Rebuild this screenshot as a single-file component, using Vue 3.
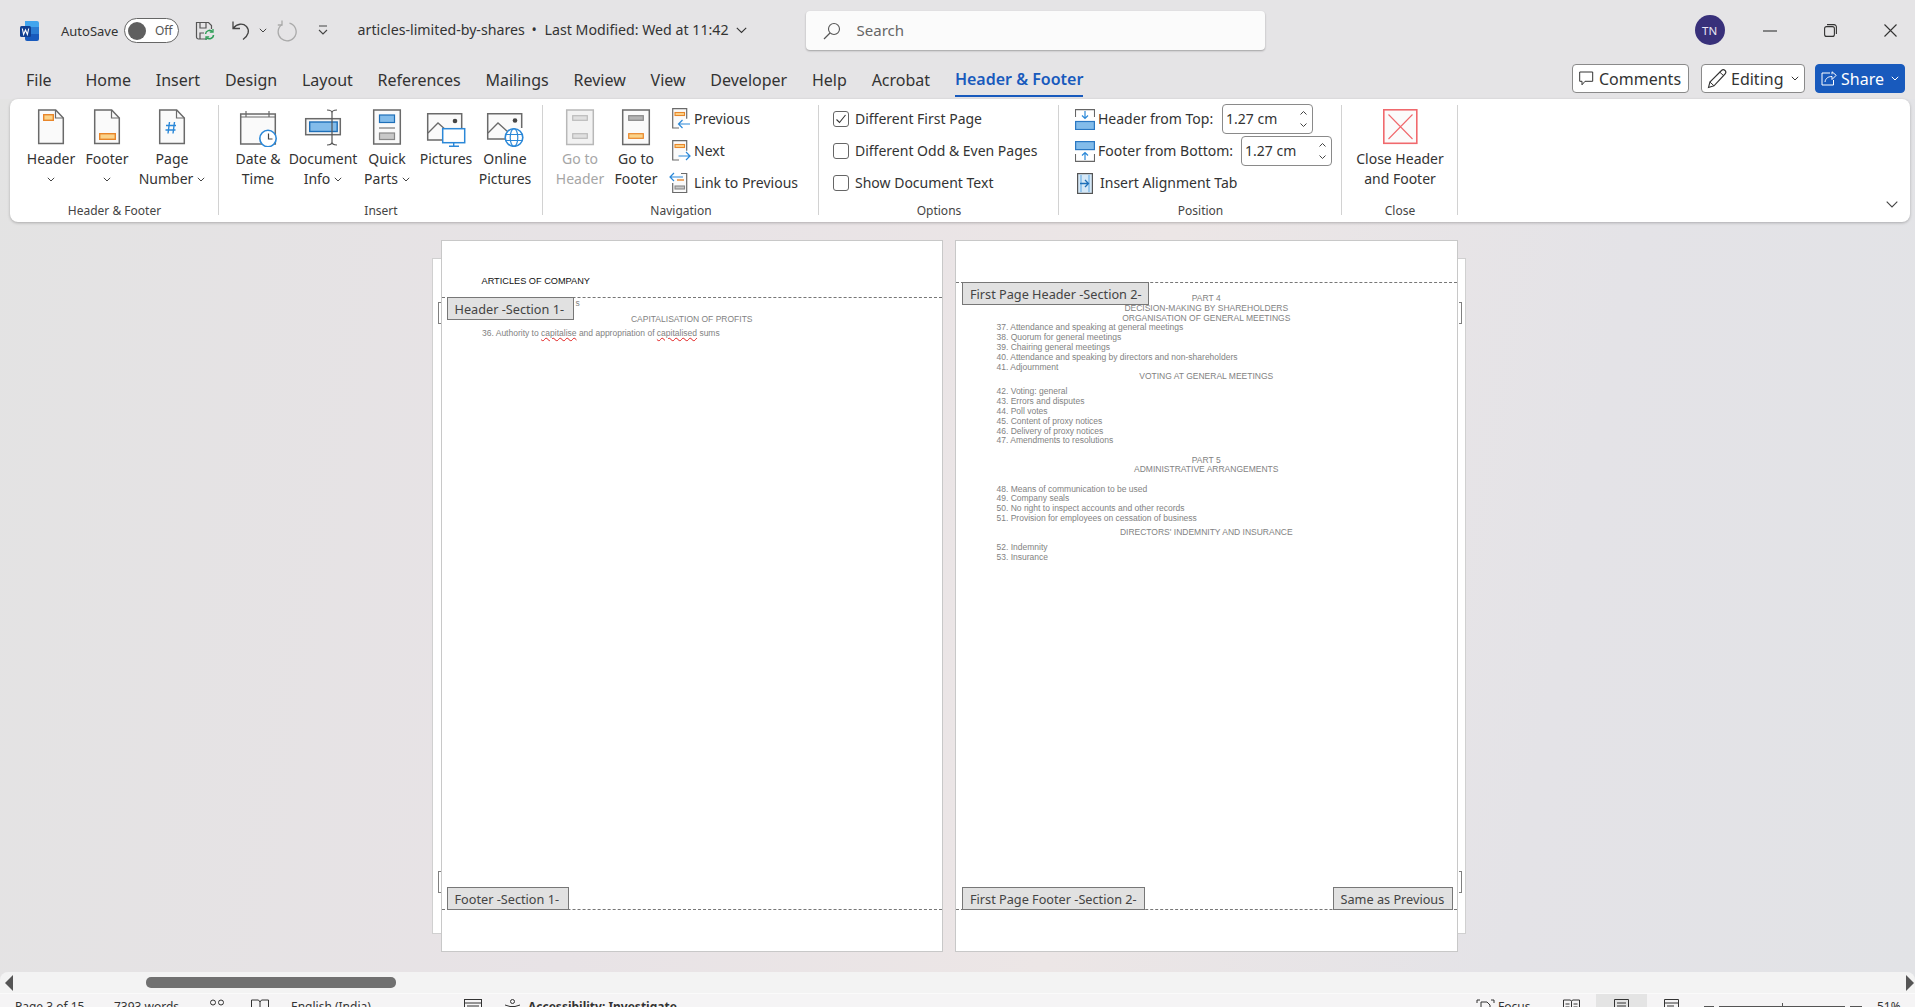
<template>
  <div class="word">
    <!-- title bar -->
    <header class="titlebar">
      <svg class="logo" width="20" height="20" viewBox="0 0 20 20">
        <path d="M5 0h12a2 2 0 0 1 2 2v4H5z" fill="#41a5ee" />
        <rect x="5" y="6" width="14" height="7" fill="#2b7cd3" />
        <path d="M5 13h14v5a2 2 0 0 1-2 2H7a2 2 0 0 1-2-2z" fill="#185abd" />
        <rect x="0" y="5" width="11" height="11" rx="1.5" fill="#103f91" />
        <path d="M2.3 7.5l1.3 6 1.9-4.5 1.9 4.5 1.3-6" fill="none" stroke="#fff" stroke-width="1.1" />
      </svg>
      <span class="autosave">AutoSave</span>
      <div class="toggle"><i class="knob"></i><span>Off</span></div>
      <svg class="save" width="20" height="21" viewBox="0 0 20 21">
        <path d="M12 19H3.5a2 2 0 0 1-2-2V2.5h12l3 3V9" fill="none" stroke="#555" stroke-width="1.2" />
        <path d="M5 3v5h6V3M5 19v-6h4" fill="none" stroke="#555" stroke-width="1.2" />
        <path d="M10.5 14a4 4 0 0 1 7-2.2M18.5 15a4 4 0 0 1-7 2.4" fill="none" stroke="#2f9e58" stroke-width="1.5" />
        <path d="M18 9v3.2h-3.2M11 20v-3.2h3.2" fill="none" stroke="#2f9e58" stroke-width="1.3" />
      </svg>
      <svg class="undo" width="20" height="21" viewBox="0 0 20 21">
        <path d="M2 1.500v7h7M2.500 8C6 3.500 12 3 15.500 6.500c3.500 4 2 9-3.500 13" fill="none" stroke="#444" stroke-width="1.300" />
      </svg>
      <svg class="qat-chev" width="8" height="5" viewBox="0 0 8 5"><path d="M.8.8L4 4l3.2-3.2" fill="none" stroke="#444" /></svg>
      <svg class="redo" width="20" height="22" viewBox="0 0 20 22">
        <path d="M12.500 3.200a9 9 0 1 1-7.500 1.300" fill="none" stroke="#aaa" stroke-width="1.300" />
        <path d="M5 .5v4.500H.8" fill="none" stroke="#aaa" stroke-width="1.300" />
      </svg>
      <svg class="qat-more" width="10" height="11" viewBox="0 0 10 11">
        <path d="M1 1h8M1 5l4 4 4-4" fill="none" stroke="#444" stroke-width="1.1" />
      </svg>
      <span class="doc-title">articles-limited-by-shares</span>
      <span class="doc-dot">•</span>
      <span class="doc-mod">Last Modified: Wed at 11:42</span>
      <svg class="doc-chev" width="11" height="7" viewBox="0 0 11 7"><path d="M.8.8l4.700 4.700L10.200.8" fill="none" stroke="#333" stroke-width="1.1" /></svg>

      <div class="search">
        <svg width="18" height="18" viewBox="0 0 18 18">
          <circle cx="11" cy="7" r="5.500" fill="none" stroke="#555" stroke-width="1.1" />
          <path d="M7 11l-6 6" stroke="#555" stroke-width="1.3" />
        </svg>
        <span class="search-text">Search</span>
      </div>

      <div class="avatar">TN</div>
      <svg class="win-min" width="14" height="2" viewBox="0 0 14 2"><path d="M0 1h14" stroke="#333" stroke-width="1.100" /></svg>
      <svg class="win-max" width="13" height="13" viewBox="0 0 13 13">
        <rect x=".6" y="2.600" width="9.800" height="9.800" rx="2" fill="none" stroke="#333" stroke-width="1.100" />
        <path d="M3 .6h7a2.400 2.400 0 0 1 2.400 2.400v7" fill="none" stroke="#333" stroke-width="1.100" />
      </svg>
      <svg class="win-close" width="13" height="13" viewBox="0 0 13 13"><path d="M.5.5l12 12M12.500.5l-12 12" stroke="#333" stroke-width="1.100" /></svg>
    </header>

    <!-- tabs row -->
    <nav class="tabs">
      <span v-for="t in tabs" :key="t" class="tab" :class="{ first: t === 'File' }">{{ t }}</span>
      <span class="tab active">Header &amp; Footer</span>
      <div class="tab-actions">
        <button class="act comments">
          <svg width="15" height="15" viewBox="0 0 15 15"><path d="M.7 1h13v9.300H6L3 13.800v-3.500H.7z" fill="none" stroke="#333" stroke-width="1" /></svg>
          Comments
        </button>
        <button class="act editing">
          <svg width="20" height="20" viewBox="0 0 20 20">
            <path d="M1.500 18.500l1.400-5.500L14.500 1.500a2 2 0 0 1 3.500 3.500L7 16.800z" fill="none" stroke="#333" stroke-width="1.100" />
            <path d="M2.900 13l4.100 3.800M12.800 3.200l4.200 3.800" stroke="#333" stroke-width="1" />
          </svg>
          Editing
          <svg class="chev" width="8" height="5" viewBox="0 0 8 5"><path d="M.8.8L4 4l3.200-3.200" fill="none" stroke="#333" /></svg>
        </button>
        <button class="act share">
          <svg width="16" height="15" viewBox="0 0 16 15">
            <path d="M9 2H1v12h11.500V9" fill="none" stroke="#fff" stroke-width="1" />
            <path d="M4 11c.5-4 3.500-5.500 7-5.500V8.500l4.200-4.200L11 .8v2.500" fill="none" stroke="#fff" stroke-width="1" />
          </svg>
          Share
          <svg class="chev" width="8" height="5" viewBox="0 0 8 5"><path d="M.8.8L4 4l3.200-3.200" fill="none" stroke="#fff" /></svg>
        </button>
      </div>
    </nav>

    <!-- ribbon -->
    <section class="ribbon">
      <div class="group g-hf">
        <div class="group-body">
          <div class="big w-58">
            <svg class="big-icon" width="40" height="38" viewBox="0 0 40 38">
              <path d="M7.700 1h17l7.600 8v25.500H7.700z" fill="#fafafa" stroke="#6a6a6a" stroke-width="1.500" />
              <path d="M24.500 1v8h7.800" fill="none" stroke="#6a6a6a" stroke-width="1.200" />
              <rect x="12.700" y="5.700" width="9.600" height="5.600" fill="#fbd38a" stroke="#e8862a" stroke-width="1.400" />
            </svg>
            <span class="big-label">Header</span>
            <span class="big-label"><svg class="chev" width="8" height="5" viewBox="0 0 8 5"><path d="M.8.8L4 4l3.200-3.200" fill="none" stroke="#444" /></svg></span>
          </div>
          <div class="big w-54">
            <svg class="big-icon" width="40" height="38" viewBox="0 0 40 38">
              <path d="M7.700 1h17l7.600 8v25.500H7.700z" fill="#fafafa" stroke="#6a6a6a" stroke-width="1.500" />
              <path d="M24.500 1v8h7.800" fill="none" stroke="#6a6a6a" stroke-width="1.200" />
              <rect x="12.700" y="24.700" width="15.600" height="5.600" fill="#fbd38a" stroke="#e8862a" stroke-width="1.400" />
            </svg>
            <span class="big-label">Footer</span>
            <span class="big-label"><svg class="chev" width="8" height="5" viewBox="0 0 8 5"><path d="M.8.8L4 4l3.200-3.200" fill="none" stroke="#444" /></svg></span>
          </div>
          <div class="big w-76">
            <svg class="big-icon" width="40" height="38" viewBox="0 0 40 38">
              <path d="M7.700 1h17l7.600 8v25.500H7.700z" fill="#fafafa" stroke="#6a6a6a" stroke-width="1.500" />
              <path d="M24.500 1v8h7.800" fill="none" stroke="#6a6a6a" stroke-width="1.200" />
              <path d="M17.500 13l-1.500 11.500M22.500 13L21 24.500M14 16.500h10M13.500 21h10" fill="none" stroke="#2b88d8" stroke-width="1.400" />
            </svg>
            <span class="big-label">Page</span>
            <span class="big-label">Number <svg class="chev" width="8" height="5" viewBox="0 0 8 5"><path d="M.8.8L4 4l3.200-3.200" fill="none" stroke="#444" /></svg></span>
          </div>
        </div>
        <div class="group-name">Header &amp; Footer</div>
      </div>

      <div class="group g-insert">
        <div class="group-body">
          <div class="big w-64">
            <svg class="big-icon" width="40" height="38" viewBox="0 0 40 38">
              <path d="M2.700 5h34.600v30H2.700z" fill="#fafafa" stroke="#6a6a6a" stroke-width="1.500" />
              <path d="M2.700 8h34.600M8 2v6M31 2v6" fill="none" stroke="#6a6a6a" stroke-width="1.200" />
              <circle cx="30" cy="29.500" r="8.200" fill="#fff" stroke="#2b88d8" stroke-width="1.600" />
              <path d="M30.500 24.500v5.500h4" fill="none" stroke="#444" stroke-width="1.200" />
            </svg>
            <span class="big-label">Date &amp;</span>
            <span class="big-label">Time</span>
          </div>
          <div class="big w-66">
            <svg class="big-icon" width="40" height="38" viewBox="0 0 40 38">
              <rect x="2.700" y="9.700" width="34.600" height="16" fill="#f5f5f5" stroke="#6a6a6a" stroke-width="1.500" />
              <rect x="6.700" y="13" width="27.500" height="9.500" fill="#83bcea" stroke="#1e6fb8" stroke-width="1.400" />
              <path d="M24 1c3 0 5 .8 5 3v29c0 2-2 3-5 3M34 1c-3 0-5 .8-5 3v29c0 2 2 3 5 3" fill="none" stroke="#555" stroke-width="1.200" />
            </svg>
            <span class="big-label">Document</span>
            <span class="big-label">Info <svg class="chev" width="8" height="5" viewBox="0 0 8 5"><path d="M.8.8L4 4l3.200-3.200" fill="none" stroke="#444" /></svg></span>
          </div>
          <div class="big w-62">
            <svg class="big-icon" width="40" height="38" viewBox="0 0 40 38">
              <rect x="6.700" y="1" width="26.600" height="34" fill="#fafafa" stroke="#6a6a6a" stroke-width="1.500" />
              <rect x="12.500" y="6" width="15" height="7.500" fill="#83bcea" stroke="#1e6fb8" stroke-width="1.200" />
              <path d="M12 19h16" stroke="#777" stroke-width="1.200" />
              <rect x="12.500" y="24" width="15" height="6.500" fill="#c8c8c8" stroke="#888" stroke-width="1.200" />
            </svg>
            <span class="big-label">Quick</span>
            <span class="big-label">Parts <svg class="chev" width="8" height="5" viewBox="0 0 8 5"><path d="M.8.8L4 4l3.200-3.200" fill="none" stroke="#444" /></svg></span>
          </div>
          <div class="big w-56">
            <svg class="big-icon" width="40" height="38" viewBox="0 0 40 38">
              <path d="M16 31H1.700V4.700h34V19" fill="#fafafa" stroke="#6a6a6a" stroke-width="1.500" />
              <path d="M2 24l10-10 9 8" fill="none" stroke="#6a6a6a" stroke-width="1.300" />
              <circle cx="29" cy="12" r="2.300" fill="#444" />
              <rect x="16.700" y="19.700" width="22" height="14" fill="#fff" stroke="#2b88d8" stroke-width="1.500" />
              <path d="M27.700 34v3M23 37.300h10" stroke="#2b88d8" stroke-width="1.400" />
            </svg>
            <span class="big-label">Pictures</span>
          </div>
          <div class="big w-62">
            <svg class="big-icon" width="40" height="38" viewBox="0 0 40 38">
              <path d="M21 30H2.700V4.700h34V19" fill="#fafafa" stroke="#6a6a6a" stroke-width="1.500" />
              <path d="M3 24l10-10 10 9" fill="none" stroke="#6a6a6a" stroke-width="1.300" />
              <circle cx="30" cy="11.500" r="2.300" fill="#444" />
              <circle cx="29" cy="28.500" r="8.800" fill="#fff" stroke="#2b88d8" stroke-width="1.600" />
              <ellipse cx="29" cy="28.500" rx="3.800" ry="8.800" fill="none" stroke="#2b88d8" stroke-width="1.200" />
              <path d="M20.500 25.500h17M20.500 31.500h17" stroke="#2b88d8" stroke-width="1.200" />
            </svg>
            <span class="big-label">Online</span>
            <span class="big-label">Pictures</span>
          </div>
        </div>
        <div class="group-name">Insert</div>
      </div>

      <div class="group g-nav">
        <div class="group-body">
          <div class="big w-56 disabled">
            <svg class="big-icon" width="40" height="38" viewBox="0 0 40 38">
              <rect x="6.700" y="1" width="26.600" height="34.500" fill="#f2f2f2" stroke="#b8b8b8" stroke-width="1.500" />
              <rect x="12.700" y="6.700" width="14.600" height="4.600" fill="#e0e0e0" stroke="#bbb" stroke-width="1.200" />
              <rect x="12.700" y="24.700" width="14.600" height="4.600" fill="#e0e0e0" stroke="#bbb" stroke-width="1.200" />
            </svg>
            <span class="big-label">Go to</span>
            <span class="big-label">Header</span>
          </div>
          <div class="big w-56">
            <svg class="big-icon" width="40" height="38" viewBox="0 0 40 38">
              <rect x="6.700" y="1" width="26.600" height="34.500" fill="#fafafa" stroke="#6a6a6a" stroke-width="1.500" />
              <rect x="12.700" y="6.700" width="14.600" height="4.600" fill="#b4b4b4" stroke="#888" stroke-width="1.200" />
              <rect x="12.700" y="24.700" width="14.600" height="4.600" fill="#fbd38a" stroke="#e8862a" stroke-width="1.200" />
            </svg>
            <span class="big-label">Go to</span>
            <span class="big-label">Footer</span>
          </div>
          <div class="small-col nav-links">
            <div class="small">
              <svg width="22" height="22" viewBox="0 0 22 22">
                <path d="M10 20H3.700V.7h14v10" fill="#fafafa" stroke="#6a6a6a" stroke-width="1.200" />
                <rect x="6" y="4.500" width="9.500" height="3" fill="#fbd38a" stroke="#e8862a" stroke-width="1.100" />
                <path d="M21 16H9.500M13.500 12l-4 4 4 4" fill="none" stroke="#2b88d8" stroke-width="1.200" />
              </svg>
              <span class="txt">Previous</span>
            </div>
            <div class="small">
              <svg width="22" height="22" viewBox="0 0 22 22">
                <path d="M10 20H3.700V.7h14v10" fill="#fafafa" stroke="#6a6a6a" stroke-width="1.200" />
                <rect x="6" y="4.500" width="9.500" height="3" fill="#fbd38a" stroke="#e8862a" stroke-width="1.100" />
                <path d="M9.500 16H21M17 12l4 4-4 4" fill="none" stroke="#2b88d8" stroke-width="1.200" />
              </svg>
              <span class="txt">Next</span>
            </div>
            <div class="small">
              <svg width="22" height="22" viewBox="0 0 22 22">
                <path d="M12 1.500h5.700V20.500H3.700V11" fill="#fafafa" stroke="#6a6a6a" stroke-width="1.200" />
                <path d="M8 8h7" stroke="#e8862a" stroke-width="1.400" />
                <rect x="6" y="14" width="9.500" height="3" fill="#c8c8c8" stroke="#888" stroke-width="1.100" />
                <path d="M14 5H1M5 1L1 5l4 4" fill="none" stroke="#2b88d8" stroke-width="1.200" />
              </svg>
              <span class="txt">Link to Previous</span>
            </div>
          </div>
        </div>
        <div class="group-name">Navigation</div>
      </div>

      <div class="group g-opts">
        <div class="small-col opts">
          <label v-for="o in options" :key="o.text" class="small check">
            <span class="box">
              <svg v-if="o.on" width="12" height="12" viewBox="0 0 12 12"><path d="M1.500 6.500l3 3 6-7.500" fill="none" stroke="#333" stroke-width="1.100" /></svg>
            </span>
            <span class="txt">{{ o.text }}</span>
          </label>
        </div>
        <div class="group-name">Options</div>
      </div>

      <div class="group g-pos">
        <div class="small-col pos">
          <div class="small">
            <svg width="20" height="21" viewBox="0 0 20 21">
              <path d="M.5 8V.6h19V8" fill="none" stroke="#666" stroke-width="1.100" />
              <path d="M10 2v7M7 6.500l3 3 3-3" fill="none" stroke="#2b88d8" stroke-width="1.200" />
              <rect x=".6" y="12.500" width="18.800" height="8" fill="#83bcea" stroke="#2b78c2" stroke-width="1.200" />
            </svg>
            <span class="txt pos-top">Header from Top:</span>
            <div class="spin">
              <span class="txt">1.27 cm</span>
              <span class="arrows">
                <svg width="7" height="4" viewBox="0 0 7 4"><path d="M.5 3.500l3-3 3 3" fill="none" stroke="#444" /></svg>
                <svg width="7" height="4" viewBox="0 0 7 4"><path d="M.5.500l3 3 3-3" fill="none" stroke="#444" /></svg>
              </span>
            </div>
          </div>
          <div class="small">
            <svg width="20" height="21" viewBox="0 0 20 21">
              <rect x=".6" y=".6" width="18.800" height="8" fill="#83bcea" stroke="#2b78c2" stroke-width="1.200" />
              <path d="M10 19v-7M7 14.500l3-3 3 3" fill="none" stroke="#2b88d8" stroke-width="1.200" />
              <path d="M.5 13v7.400h19V13" fill="none" stroke="#666" stroke-width="1.100" />
            </svg>
            <span class="txt pos-bottom">Footer from Bottom:</span>
            <div class="spin">
              <span class="txt">1.27 cm</span>
              <span class="arrows">
                <svg width="7" height="4" viewBox="0 0 7 4"><path d="M.5 3.500l3-3 3 3" fill="none" stroke="#444" /></svg>
                <svg width="7" height="4" viewBox="0 0 7 4"><path d="M.5.500l3 3 3-3" fill="none" stroke="#444" /></svg>
              </span>
            </div>
          </div>
          <div class="small">
            <svg width="20" height="21" viewBox="0 0 20 21">
              <rect x="2.600" y=".6" width="14.800" height="19.800" fill="#d5e8f7" stroke="#555" stroke-width="1.200" />
              <path d="M6 2v17M14 2v17" stroke="#83bcea" stroke-width="1.500" />
              <path d="M5 10.500h8M10 7l3.500 3.500L10 14" fill="none" stroke="#1e6fb8" stroke-width="1.300" />
            </svg>
            <span class="txt tab-label">Insert Alignment Tab</span>
          </div>
        </div>
        <div class="group-name">Position</div>
      </div>

      <div class="group g-close">
        <div class="group-body">
          <div class="big w-full">
            <svg class="big-icon" width="40" height="38" viewBox="0 0 40 38">
              <rect x="3.800" y=".8" width="33" height="33.500" fill="#fbfbfb" stroke="#f0696d" stroke-width="1.600" />
              <path d="M8.500 5.500l24 24.500M32.500 5.500l-24 24.500" stroke="#f0696d" stroke-width="1.100" />
            </svg>
            <span class="big-label">Close Header</span>
            <span class="big-label">and Footer</span>
          </div>
        </div>
        <div class="group-name">Close</div>
      </div>

      <svg class="collapse" width="12" height="7" viewBox="0 0 12 7"><path d="M.7.7L6 6l5.300-5.300" fill="none" stroke="#444" stroke-width="1.100" /></svg>
    </section>

    <!-- document canvas -->
    <main class="canvas">
      <div class="page">
        <div class="edge edge-left">
          <i class="mark mark-top"></i>
          <i class="mark mark-bottom"></i>
        </div>
        <div class="sheet first-sheet">
          <p class="company">ARTICLES OF COMPANY</p>
          <p class="heading cap">CAPITALISATION OF PROFITS</p>
          <p class="item auth">36. Authority to <span class="typo">capitalise</span> and appropriation of <span class="typo">capitalised</span> sums</p>
          <i class="dash dash-h1"></i>
          <i class="dash dash-f"></i>
          <span class="tag tag-h1">Header -Section 1-</span>
          <span class="stray">s</span>
          <span class="tag tag-f1">Footer -Section 1-</span>
        </div>
      </div>

      <div class="page">
        <div class="edge edge-right">
          <i class="mark mark-top"></i>
          <i class="mark mark-bottom"></i>
        </div>
        <div class="sheet second-sheet">
          <p v-for="l in lines" :key="l.text" :class="[l.head ? 'heading' : 'item', l.gap]">{{ l.text }}</p>
          <i class="dash dash-h2"></i>
          <i class="dash dash-f"></i>
          <span class="tag tag-h2">First Page Header -Section 2-</span>
          <span class="tag tag-f2">First Page Footer -Section 2-</span>
          <span class="tag tag-same">Same as Previous</span>
        </div>
      </div>
    </main>

    <!-- horizontal scrollbar -->
    <div class="hscroll">
      <svg width="8" height="16" viewBox="0 0 8 16"><path d="M8 0v16L0 8z" fill="#555" /></svg>
      <div class="thumb"></div>
      <svg class="hs-right" width="8" height="16" viewBox="0 0 8 16"><path d="M0 0v16l8-8z" fill="#555" /></svg>
    </div>

    <!-- status bar, cut by the window bottom -->
    <footer class="status">
      <span class="st-page">Page 3 of 15</span>
      <span class="st-words">7393 words</span>
      <svg class="st-ic1" width="19" height="18" viewBox="0 0 19 18">
        <circle cx="5" cy="3.500" r="2.500" fill="none" stroke="#333" />
        <circle cx="13" cy="3.500" r="2.500" fill="none" stroke="#333" />
        <path d="M0 9h12M0 13h9" stroke="#333" />
        <circle cx="15" cy="11" r="3" fill="#333" />
      </svg>
      <svg class="st-ic2" width="18" height="18" viewBox="0 0 18 18">
        <path d="M.5 1h7l1.500 2 1.500-2h7v13H.5zM9 3v11" fill="none" stroke="#333" />
      </svg>
      <span class="st-lang">English (India)</span>
      <svg class="st-ic3" width="18" height="18" viewBox="0 0 18 18">
        <rect x=".5" y=".5" width="17" height="16" fill="none" stroke="#333" />
        <path d="M.5 4h17M3 7h12" stroke="#333" />
      </svg>
      <svg class="st-ic4" width="17" height="18" viewBox="0 0 17 18">
        <circle cx="8.500" cy="2.500" r="2" fill="none" stroke="#333" />
        <path d="M1 6l5 1.500h5L16 6M6 8v9M11 8v9" fill="none" stroke="#333" />
      </svg>
      <span class="st-a11y">Accessibility: Investigate</span>

      <div class="st-right">
        <svg width="19" height="18" viewBox="0 0 19 18">
          <path d="M1 4V1h3M15 1h3v3" fill="none" stroke="#333" />
          <path d="M5 3h6l3 3v11H5z" fill="none" stroke="#333" />
        </svg>
        <span class="st-focus">Focus</span>
        <svg class="st-read" width="17" height="18" viewBox="0 0 17 18">
          <path d="M.5 1h7l1 1.500L9.500 1h7v15h-16zM8.500 2.500V16M2.500 5h4M2.500 8h4M10.500 5h4M10.500 8h4" fill="none" stroke="#333" />
        </svg>
        <div class="st-print">
          <svg width="15" height="18" viewBox="0 0 15 18">
            <path d="M.5.500h14v17H.5zM3 4h9M3 7h9M3 10h9" fill="none" stroke="#333" />
          </svg>
        </div>
        <svg class="st-web" width="16" height="18" viewBox="0 0 16 18">
          <path d="M7 15H.5V.5h14V8M.5 4h14M3 7h7M3 10h4" fill="none" stroke="#333" />
          <circle cx="11.500" cy="12.500" r="3.500" fill="none" stroke="#333" />
        </svg>
        <span class="st-minus"></span>
        <div class="st-slider"><i></i></div>
        <span class="st-plus"></span>
        <span class="st-zoom">51%</span>
      </div>
    </footer>
  </div>
</template>

<script setup>
const tabs = ['File', 'Home', 'Insert', 'Design', 'Layout', 'References', 'Mailings', 'Review', 'View', 'Developer', 'Help', 'Acrobat']

const options = [
  { text: 'Different First Page', on: true },
  { text: 'Different Odd & Even Pages', on: false },
  { text: 'Show Document Text', on: false }
]

// gap = extra space above the line in the document preview
const lines = [
  { text: 'PART 4', head: true },
  { text: 'DECISION-MAKING BY SHAREHOLDERS', head: true },
  { text: 'ORGANISATION OF GENERAL MEETINGS', head: true },
  { text: '37. Attendance and speaking at general meetings' },
  { text: '38. Quorum for general meetings' },
  { text: '39. Chairing general meetings' },
  { text: '40. Attendance and speaking by directors and non-shareholders' },
  { text: '41. Adjournment' },
  { text: 'VOTING AT GENERAL MEETINGS', head: true },
  { text: '42. Voting: general', gap: 'gap-5' },
  { text: '43. Errors and disputes' },
  { text: '44. Poll votes' },
  { text: '45. Content of proxy notices' },
  { text: '46. Delivery of proxy notices' },
  { text: '47. Amendments to resolutions' },
  { text: 'PART 5', head: true, gap: 'gap-9' },
  { text: 'ADMINISTRATIVE ARRANGEMENTS', head: true },
  { text: '48. Means of communication to be used', gap: 'gap-9' },
  { text: '49. Company seals' },
  { text: '50. No right to inspect accounts and other records' },
  { text: '51. Provision for employees on cessation of business' },
  { text: "DIRECTORS' INDEMNITY AND INSURANCE", head: true, gap: 'gap-4' },
  { text: '52. Indemnity', gap: 'gap-5' },
  { text: '53. Insurance' }
]
</script>

<style>
html, body { margin: 0; overflow: hidden; }
</style>

<style scoped>
.word {
  width: 1915px;
  height: 1007px;
  overflow: hidden;
  display: flex;
  flex-direction: column;
  font-family: "Noto Sans", "Open Sans", sans-serif;
  color: #333;
  background: linear-gradient(100deg, #e3e3e3 0%, #e8e3e6 35%, #ece6e6 58%, #e4e3e7 80%, #e2e3e6 100%);
}
p { margin: 0; }
.txt { position: relative; top: -1px; }

/* title bar */
.titlebar {
  height: 61px;
  flex: none;
  display: flex;
  align-items: center;
  font-size: 14px;
  background: #e5e4e6;
}
.logo { margin-left: 20px; }
.autosave { margin-left: 21px; width: 54px; font-size: 13px; white-space: nowrap; }
.toggle {
  margin-left: 9px;
  width: 55px;
  height: 25px;
  box-sizing: border-box;
  border: 1px solid #666;
  border-radius: 13px;
  background: #fff;
  display: flex;
  align-items: center;
  font-size: 12px;
  color: #555;
}
.knob { width: 18px; height: 18px; border-radius: 50%; background: #5f5f5f; margin: 0 9px 0 3px; }
.save { margin-left: 16px; }
.undo { margin-left: 16px; }
.qat-chev { margin-left: 8px; }
.redo { margin-left: 10px; }
.qat-more { margin-left: 21px; }
.doc-title { margin-left: 29.600px; margin-bottom: 2px; white-space: nowrap; width: 169px; font-size: 14.200px; }
.doc-dot { margin-left: 5px; margin-bottom: 2px; width: 13px; }
.doc-mod { white-space: nowrap; width: 184px; margin-bottom: 2px; font-size: 14.200px; }
.doc-chev { margin-left: 7px; }
.search {
  margin-left: 59px;
  width: 459px;
  height: 39px;
  box-sizing: border-box;
  padding-left: 17px;
  display: flex;
  align-items: center;
  gap: 16px;
  background: #fbfbfb;
  border-radius: 4px;
  box-shadow: 0 1px 2px rgba(0, 0, 0, 0.3);
  font-size: 15px;
  color: #666;
}
.search-text { position: relative; top: -1px; }
.avatar {
  margin-left: 430px;
  margin-bottom: 1px;
  width: 30px;
  height: 30px;
  border-radius: 50%;
  background: #38307a;
  color: #e8e6f5;
  font-size: 11.500px;
  display: flex;
  align-items: center;
  justify-content: center;
}
.win-min { margin-left: 38px; }
.win-max { margin-left: 47px; }
.win-close { margin-left: 47px; }

/* tabs */
.tabs {
  height: 38px;
  flex: none;
  display: flex;
  align-items: center;
  gap: 24.800px;
  padding-left: 26px;
  font-size: 16px;
  background: #e5e4e6;
  position: relative;
}
.tab { white-space: nowrap; line-height: 36px; }
.tab.first { margin-right: 9px; }
.tab.active {
  color: #185abd;
  font-weight: 600;
  border-bottom: 2px solid #185abd;
  height: 33px;
  line-height: 34px;
  margin-top: -1px;
}
.tab-actions { margin-left: auto; padding-right: 10px; display: flex; gap: 12px; align-items: center; padding-bottom: 3px; }
.act {
  height: 29px;
  box-sizing: border-box;
  display: flex;
  align-items: center;
  gap: 5px;
  padding: 0;
  border: 1px solid #8a8a8a;
  border-radius: 4px;
  background: #fff;
  font-family: inherit;
  font-size: 16px;
  color: #333;
}
.comments { width: 117px; padding-left: 6px; }
.editing { width: 104px; padding-left: 5px; gap: 4px; }
.editing .chev { margin-left: 3px; }
.share { width: 90px; padding-left: 5px; gap: 4px; background: #185abd; border-color: #185abd; color: #fff; margin-left: -2px; }
.share .chev { margin-left: 3px; }

/* ribbon */
.ribbon {
  flex: none;
  margin: 0 5px 0 10px;
  height: 123px;
  box-sizing: border-box;
  background: #fff;
  border-radius: 8px;
  box-shadow: 0 1px 3px rgba(0, 0, 0, 0.25);
  display: flex;
  position: relative;
  font-size: 14px;
}
.group { position: relative; display: flex; flex-direction: column; height: 100%; box-sizing: border-box; padding-top: 4px; }
.group::after { content: ""; position: absolute; right: 0; top: 6px; bottom: 7px; width: 1px; background: #d2d2d2; }
.group-body { display: flex; height: 100px; }
.group-name { height: 16px; line-height: 16px; text-align: center; font-size: 12px; color: #444; }
.g-hf { width: 209px; }
.g-hf .group-body { padding-left: 12px; }
.g-insert { width: 324px; }
.g-insert .group-body { padding-left: 7px; }
.g-nav { width: 276px; }
.g-nav .group-body { padding-left: 9px; }
.g-opts { width: 240px; }
.g-pos { width: 283px; }
.g-close { width: 116px; }

.big { display: flex; flex-direction: column; align-items: center; flex: none; }
.w-54 { width: 54px; }
.w-56 { width: 56px; }
.w-58 { width: 58px; }
.w-62 { width: 62px; }
.w-64 { width: 64px; }
.w-66 { width: 66px; }
.w-76 { width: 76px; }
.w-full { width: 100%; }
.big-icon { margin: 6px 0 2px; flex: none; }
.big-label { line-height: 20px; white-space: nowrap; height: 20px; display: flex; align-items: center; gap: 4px; }
.disabled { color: #a6a6a6; }

.small-col { display: flex; flex-direction: column; height: 96px; }
.small-col.opts { height: 100px; padding-left: 14px; }
.small-col.pos { height: 100px; padding-left: 16px; }
.nav-links { padding-left: 5px; }
.opts, .pos { flex: none; }
.small { height: 32px; display: flex; align-items: center; gap: 3px; white-space: nowrap; }
.small.check { gap: 6px; }
.box {
  width: 16px;
  height: 16px;
  box-sizing: border-box;
  border: 1px solid #666;
  border-radius: 3px;
  display: flex;
  align-items: center;
  justify-content: center;
}
.pos-top { width: 121px; }
.pos-bottom { width: 140px; }
.tab-label { margin-left: 2px; }
.spin {
  width: 91px;
  height: 30px;
  box-sizing: border-box;
  border: 1px solid #8a8a8a;
  border-radius: 4px;
  padding: 0 5px 0 3px;
  display: flex;
  align-items: center;
  justify-content: space-between;
}
.arrows { display: flex; flex-direction: column; gap: 8px; }
.arrows svg { display: block; }
.collapse { position: absolute; right: 12px; bottom: 14px; }

/* canvas */
.canvas {
  flex: none;
  height: 750px;
  box-sizing: border-box;
  padding: 18px 0 0 440.500px;
  display: flex;
  align-items: flex-start;
  gap: 12px;
}
.page { position: relative; width: 502.500px; height: 712px; }
.edge { position: absolute; top: 18px; bottom: 18px; width: 30px; background: #fff; border: 1px solid #d0d0d0; box-sizing: border-box; }
.edge-left { left: -9px; }
.edge-right { right: -8px; }
.mark { position: absolute; width: 3px; height: 22px; border: 1px solid #808080; box-sizing: border-box; }
.edge-left .mark { left: 5px; border-right: none; }
.edge-right .mark { right: 3px; border-left: none; }
.mark-top { top: 43px; }
.mark-bottom { bottom: 40px; }
.sheet {
  position: relative;
  height: 100%;
  box-sizing: border-box;
  background: #fff;
  border: 1px solid #c8c8c8;
  font-family: "Liberation Sans", Arial, sans-serif;
  font-size: 8.500px;
  line-height: 9.800px;
  color: #828282;
}
.first-sheet { padding-top: 36px; }
.second-sheet { padding-top: 53px; }
.company { color: #111; font-size: 9.200px; padding-left: 40px; }
.heading { text-align: center; }
.item { padding-left: 40.500px; white-space: nowrap; }
.cap { margin-top: 28px; }
.auth { margin-top: 4px; }
.gap-4 { margin-top: 4.400px; }
.gap-5 { margin-top: 5.200px; }
.gap-9 { margin-top: 9.400px; }
.typo { text-decoration: underline wavy #e02020 1px; text-underline-offset: 1px; }
.dash { position: absolute; left: 0; right: 0; border-top: 1px dashed #777; }
.dash-h1 { top: 56px; }
.dash-h2 { top: 41px; }
.dash-f { bottom: 41px; }
.tag {
  position: absolute;
  height: 23px;
  box-sizing: border-box;
  padding: 0 7px;
  border: 1px solid #777;
  background: #e1e1e1;
  color: #444;
  font-family: "Noto Sans", sans-serif;
  font-size: 12.700px;
  line-height: 22px;
  white-space: nowrap;
}
.tag-h1 { left: 5px; top: 56px; width: 127px; }
.tag-h2 { left: 6px; top: 41px; width: 187px; }
.tag-f1 { left: 5px; bottom: 41px; width: 122px; }
.tag-f2 { left: 6px; bottom: 41px; width: 183px; }
.tag-same { right: 4px; bottom: 41px; width: 120px; }
.stray { position: absolute; left: 134px; top: 58px; }

/* scrollbar */
.hscroll {
  flex: none;
  height: 21px;
  box-sizing: border-box;
  background: #f3f3f3;
  border-radius: 8px 8px 0 0;
  display: flex;
  align-items: center;
  padding: 0 0 0 5px;
}
.thumb { margin-left: 133px; width: 250px; height: 11px; border-radius: 5px; background: #707070; }
.hs-right { margin-left: auto; margin-right: 1px; }

/* status bar */
.status {
  flex: none;
  height: 28px;
  display: flex;
  align-items: flex-start;
  background: #f5f4f5;
  border-top: 1px solid #fafafa;
  font-size: 12px;
  line-height: 16px;
  color: #333;
  box-sizing: border-box;
}
.status > span { margin-top: 5px; white-space: nowrap; }
.status svg { margin-top: 5px; flex: none; }
.st-page { margin-left: 15px; width: 73px; }
.st-words { margin-left: 26px; width: 67px; }
.st-ic1 { margin-left: 27px; }
.st-ic2 { margin-left: 24px; }
.st-lang { margin-left: 22px; width: 81px; }
.st-ic3 { margin-left: 92px; }
.st-ic4 { margin-left: 22px; }
.st-a11y { margin-left: 7px; font-weight: 700; }
.st-right { margin-left: auto; display: flex; align-items: flex-start; padding-right: 15px; }
.st-focus { margin: 5px 0 0 3px; width: 32px; }
.st-read { margin-left: 33px; }
.st-print { margin-left: 16px; width: 51px; height: 28px; background: #e4e4e4; display: flex; justify-content: center; }
.st-web { margin-left: 17px; }
.st-minus { margin: 12px 0 0 24px; width: 10px; height: 1px; background: #555; }
.st-slider { margin: 12px 0 0 5px; width: 126px; height: 1px; background: #555; position: relative; }
.st-slider i { position: absolute; left: 63px; top: -3px; width: 1px; height: 7px; background: #555; }
.st-plus { margin: 12px 0 0 5px; width: 12px; height: 1px; background: #555; }
.st-zoom { margin: 5px 0 0 15px; width: 23px; }
</style>
